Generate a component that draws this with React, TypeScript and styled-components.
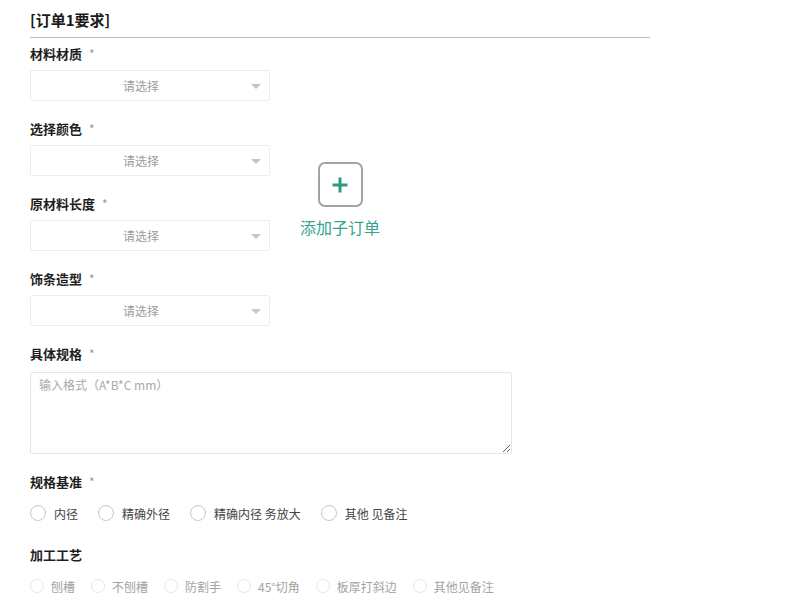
import React from "react";
import styled, { createGlobalStyle } from "styled-components";

const GlobalStyle = createGlobalStyle`
    body {
        margin: 0;
        background: #ffffff;
        font-family: "Noto Sans CJK SC", "Noto Sans", sans-serif;
        color: #222222;
    }
`;

const selectFields = ["材料材质", "选择颜色", "原材料长度", "饰条造型"];
const baseOptions = ["内径", "精确外径", "精确内径 务放大", "其他 见备注"];
const craftOptions = ["刨槽", "不刨槽", "防割手", "45°切角", "板厚打斜边", "其他见备注"];

interface FieldLabelProps {
    text: string;
    required?: boolean;
}

const FieldLabel: React.FC<FieldLabelProps> = ({ text, required }) => (
    <Label>
        {text}
        {required && <Star>*</Star>}
    </Label>
);

const App: React.FC = () => {
    return (
        <Page>
            <GlobalStyle />
            <Title>[订单1要求]</Title>
            <TopRow>
                <SelectColumn>
                    {selectFields.map((name) => (
                        <Field key={name}>
                            <FieldLabel text={name} required />
                            <SelectBox>
                                <Placeholder>请选择</Placeholder>
                                <Caret />
                            </SelectBox>
                        </Field>
                    ))}
                </SelectColumn>
                <AddColumn>
                    <AddButton>
                        <svg width="18" height="18" viewBox="0 0 18 18">
                            <path d="M9 1.5v15M1.5 9h15" stroke="#2a9d7f" strokeWidth="3" fill="none" />
                        </svg>
                    </AddButton>
                    <AddText>添加子订单</AddText>
                </AddColumn>
            </TopRow>

            <Field>
                <FieldLabel text="具体规格" required />
                <SpecInput placeholder="输入格式（A*B*C mm）" />
            </Field>

            <Field>
                <FieldLabel text="规格基准" required />
                <RadioRow gap={20}>
                    {baseOptions.map((opt) => (
                        <RadioItem key={opt} spacing={8}>
                            <Circle size={16} tone="#c8c8c8" />
                            <RadioText tone="#444444">{opt}</RadioText>
                        </RadioItem>
                    ))}
                </RadioRow>
            </Field>

            <Field>
                <FieldLabel text="加工工艺" />
                <RadioRow gap={16}>
                    {craftOptions.map((opt) => (
                        <RadioItem key={opt} spacing={7}>
                            <Circle size={14} tone="#e6e6e6" />
                            <RadioText tone="#a3a3a3">{opt}</RadioText>
                        </RadioItem>
                    ))}
                </RadioRow>
            </Field>
        </Page>
    );
};

export default App;

const Page = styled.div`
    width: 620px;
    padding: 10px 0 0 30px;
`;

const Title = styled.div`
    font-size: 15px;
    font-weight: 700;
    line-height: 20px;
    color: #1a1a1a;
    padding-bottom: 7px;
    border-bottom: 1px solid #bdbdbd;
    margin-bottom: 6px;
`;

const TopRow = styled.div`
    display: flex;
    align-items: flex-start;
`;

const SelectColumn = styled.div`
    width: 240px;
`;

const Field = styled.div`
    display: flex;
    flex-direction: column;
`;

const Label = styled.div`
    font-size: 13px;
    font-weight: 700;
    line-height: 20px;
    color: #1e1e1e;
    margin-bottom: 6px;
`;

const Star = styled.span`
    font-weight: 400;
    color: #9a9a9a;
    font-size: 12px;
    margin-left: 7px;
`;

const SelectBox = styled.div`
    position: relative;
    box-sizing: border-box;
    height: 31px;
    border: 1px solid #ededed;
    border-radius: 2px;
    display: flex;
    align-items: center;
    justify-content: center;
    padding-right: 18px;
    margin-bottom: 18px;
`;

const Placeholder = styled.span`
    font-size: 12px;
    color: #9c9c9c;
`;

const Caret = styled.span`
    position: absolute;
    right: 8px;
    top: 13px;
    width: 0;
    height: 0;
    border-left: 5px solid transparent;
    border-right: 5px solid transparent;
    border-top: 5px solid #c4c4c4;
`;

const AddColumn = styled.div`
    display: flex;
    flex-direction: column;
    align-items: center;
    width: 80px;
    margin-left: 30px;
    padding-top: 118px;
`;

const AddButton = styled.div`
    box-sizing: border-box;
    width: 45px;
    height: 45px;
    border: 2px solid #a3a3a3;
    border-radius: 7px;
    display: flex;
    align-items: center;
    justify-content: center;
`;

const AddText = styled.div`
    margin-top: 8px;
    font-size: 16px;
    line-height: 24px;
    color: #35a393;
    white-space: nowrap;
`;

const SpecInput = styled.textarea`
    box-sizing: border-box;
    width: 482px;
    height: 82px;
    margin: 2px 0 18px;
    padding: 3px 8px;
    border: 1px solid #e6e6e6;
    border-radius: 2px;
    font-family: "Noto Sans CJK SC", "Noto Sans", sans-serif;
    font-size: 12px;
    line-height: 18px;
    color: #333333;
    outline: none;

    &::placeholder {
        color: #a9a9a9;
    }
`;

const RadioRow = styled.div<{ gap: number }>`
    display: flex;
    align-items: center;
    gap: ${({ gap }) => gap}px;
    height: 20px;
    margin-top: 5px;
    margin-bottom: 22px;
`;

const RadioItem = styled.div<{ spacing: number }>`
    display: flex;
    align-items: center;
    gap: ${({ spacing }) => spacing}px;
`;

const Circle = styled.span<{ size: number; tone: string }>`
    box-sizing: border-box;
    width: ${({ size }) => size}px;
    height: ${({ size }) => size}px;
    border: 1px solid ${({ tone }) => tone};
    border-radius: 50%;
`;

const RadioText = styled.span<{ tone: string }>`
    font-size: 12px;
    color: ${({ tone }) => tone};
    white-space: nowrap;
`;
